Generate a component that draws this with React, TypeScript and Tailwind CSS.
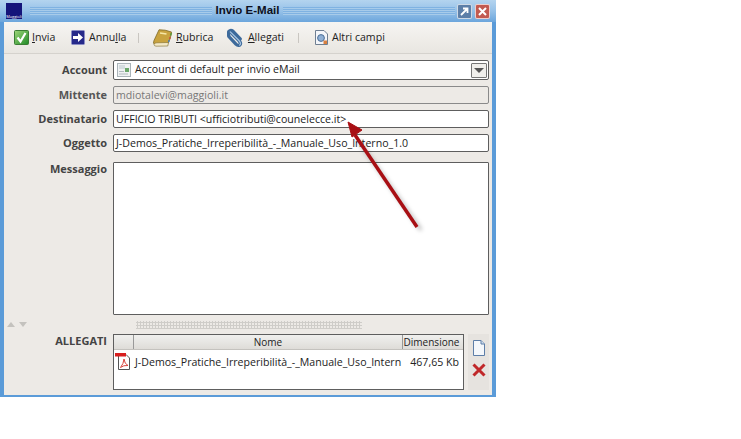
import React from 'react';

const FONT = "font-['Open_Sans','Liberation_Sans',sans-serif]";

const CheckIcon = () => (
  <svg width="15" height="15" viewBox="0 0 15 15">
    <defs>
      <linearGradient id="chk" x1="0" y1="0" x2="1" y2="1">
        <stop offset="0" stopColor="#9fd67a" />
        <stop offset="1" stopColor="#1f8a26" />
      </linearGradient>
    </defs>
    <rect x="0.5" y="0.5" width="14" height="14" rx="1" fill="url(#chk)" stroke="#3a7d34" />
    <path d="M3.5 7.5 L6.5 11.5 L11.5 3" fill="none" stroke="#fff" strokeWidth="2.2" />
  </svg>
);

const CancelIcon = () => (
  <svg width="14" height="15" viewBox="0 0 14 15">
    <rect x="0.5" y="0.5" width="13" height="14" rx="1" fill="#26298a" stroke="#8a8cc4" />
    <path d="M2 6 H7 V3 L12 7.5 L7 12 V9 H2 Z" fill="#fff" />
  </svg>
);

const BookIcon = () => (
  <svg width="20" height="18" viewBox="0 0 20 18">
    <path d="M6 0.8 Q12 0.5 18.5 3 Q18 9 15 14.5 L2 15.5 Q-0.5 15 1 11.5 Z" fill="#c9a33f" stroke="#7c6a2a" strokeWidth="0.8" />
    <path d="M1 15.3 Q2 13.5 4 13.8 L15.5 13.5 L14.8 17 L3 17.2 Q1 17 1 15.3 Z" fill="#f3e9c8" stroke="#7c6a2a" strokeWidth="0.6" />
    <path d="M7 4 L13.5 5" stroke="#f6e7a6" strokeWidth="1.6" />
    <path d="M18.4 4 L17.6 6.5" stroke="#5a9a3a" strokeWidth="1.5" />
    <path d="M17.2 8 L16.6 10" stroke="#c9563a" strokeWidth="1.5" />
    <path d="M16.2 11 L15.6 13" stroke="#4a7db5" strokeWidth="1.5" />
  </svg>
);

const ClipIcon = () => (
  <svg width="18" height="20" viewBox="0 0 18 20">
    <path d="M3.5 3.5 L13 13 Q15.5 16 13.5 17.5 Q11.5 18.5 9.5 16.5 L2.5 9 Q0.5 6 2 3 Q4 1 6.5 3 L14 11" fill="none" stroke="#3d6a9b" strokeWidth="3.6" strokeLinecap="round" />
    <path d="M3.5 3.5 L13 13 Q15.5 16 13.5 17.5" fill="none" stroke="#a5c3e0" strokeWidth="1.4" strokeLinecap="round" />
  </svg>
);

const FieldsIcon = () => (
  <svg width="13" height="15" viewBox="0 0 13 15">
    <path d="M0.5 0.5 H9 L12.5 4 V14.5 H0.5 Z" fill="#f4f6fa" stroke="#6f7f92" />
    <circle cx="6" cy="8" r="3.4" fill="#8fb0d6" stroke="#4d6f96" />
    <rect x="8.5" y="10.5" width="3.5" height="3.5" fill="#d98040" />
  </svg>
);

const AccountIcon = () => (
  <svg width="14" height="14" viewBox="0 0 14 14">
    <rect x="0.5" y="0.5" width="13" height="13" fill="#f0f2f3" stroke="#aab4b9" />
    <rect x="2" y="2" width="6" height="4" fill="#d5dde0" />
    <rect x="8" y="5" width="4" height="4" fill="#6aa86a" />
    <path d="M2 8.5 H7 M2 11 H11" stroke="#b2bbc0" />
  </svg>
);

const PdfIcon = () => (
  <svg width="16" height="17" viewBox="0 0 16 17">
    <path d="M3.5 1.5 H11 L14.5 5 V16.5 H3.5 Z" fill="#fff" stroke="#555" />
    <path d="M5.5 14.5 Q8.5 11 9 6 Q9.5 11 13 12.5 Q8.5 12 5.5 14.5 Z" fill="none" stroke="#d8433c" strokeWidth="1" />
    <rect x="0" y="0" width="11" height="3.5" fill="#d81f1f" />
  </svg>
);

const ToolButton = ({ icon, label, mark, after, gap }: { icon: React.ReactNode; label?: string; mark?: string; after?: string; gap: string }) => (
  <div className={`flex items-center ${gap}`}>
    {icon}
    <span className="text-[10.6px] text-[#222]">
      {label}
      {mark && <span className="underline">{mark}</span>}
      {after}
    </span>
  </div>
);

const Label = ({ children, className = '' }: { children: React.ReactNode; className?: string }) => (
  <div className={`text-right text-[11px] font-bold text-[#444] pr-[6px] ${className}`}>{children}</div>
);

const fieldBox = 'h-[18px] border border-[#5e5e5e] rounded-[2px] flex items-center px-[2px] text-[10.6px] leading-none';
const titleLines = 'h-[8px] bg-[repeating-linear-gradient(0deg,#a7cbea_0px,#a7cbea_1px,#7fb2e2_1px,#7fb2e2_2px)]';

export default function App() {
  return (
    <div className={`w-[741px] h-[439px] bg-white overflow-hidden relative ${FONT}`}>
      <div className="w-[496px] h-[397px] flex flex-col bg-[#5b9bd8]">
        {/* title bar */}
        <div className="h-[22px] shrink-0 flex items-center bg-gradient-to-b from-[#b4d4ef] via-[#96c1e8] to-[#6ca6dc] pl-[6px] pr-[6px]">
          <div className="w-[16px] h-[16px] bg-[#14147a] flex items-end justify-center">
            <span className="text-[4px] leading-[5px] text-white">Maggioli</span>
          </div>
          <div className={`w-[182px] ml-[8px] ${titleLines}`} />
          <div className="w-[71px] text-center text-[11.5px] font-bold text-[#0d1020] font-['Liberation_Sans',sans-serif]">Invio E-Mail</div>
          <div className={`w-[172px] ${titleLines}`} />
          <div className="flex gap-[3px] ml-[2px]">
            <div className="w-[15px] h-[15px] rounded-[2px] border border-white/70 bg-[#5d7fa8] flex items-center justify-center">
              <svg width="9" height="9" viewBox="0 0 9 9"><path d="M1 8 L7 2 M3 1.5 H7.5 V6" fill="none" stroke="#fff" strokeWidth="1.8" /></svg>
            </div>
            <div className="w-[15px] h-[15px] rounded-[2px] border border-white/70 bg-[#c25a50] flex items-center justify-center">
              <svg width="9" height="9" viewBox="0 0 9 9"><path d="M1 1 L8 8 M8 1 L1 8" fill="none" stroke="#fff" strokeWidth="2" /></svg>
            </div>
          </div>
        </div>

        {/* body */}
        <div className="flex-1 mx-[4px] mb-[2px] bg-[#edeae6] flex flex-col min-h-0">
          {/* toolbar */}
          <div className="h-[32px] shrink-0 flex items-center pl-[10px] pt-[1px] border-b border-[#d5d2cd] bg-gradient-to-b from-[#f6f5f2] to-[#e9e6e1]">
            <div className="w-[57px]"><ToolButton gap="gap-[3px]" icon={<CheckIcon />} mark="I" after="nvia" /></div>
            <div className="w-[67px]"><ToolButton gap="gap-[4px]" icon={<CancelIcon />} label="Annu" mark="l" after="la" /></div>
            <div className="w-px h-[10px] bg-[#c9c6c1]" />
            <div className="ml-[14px] w-[74px]"><ToolButton gap="gap-[3px]" icon={<BookIcon />} mark="R" after="ubrica" /></div>
            <div className="w-[57px]"><ToolButton gap="gap-[4px]" icon={<ClipIcon />} mark="A" after="llegati" /></div>
            <div className="ml-[14px] w-px h-[10px] bg-[#c9c6c1]" />
            <div className="ml-[16px]"><ToolButton gap="gap-[4px]" icon={<FieldsIcon />} label="Altri campi" /></div>
          </div>

          {/* form */}
          <div className="grid grid-cols-[109px_376px] pt-[6px] flex-1 content-start">
            <Label className="leading-[20px]">Account</Label>
            <div className="h-[20px] border border-[#5e5e5e] rounded-[2px] bg-white flex items-center text-[10.6px] text-[#222] pl-[3px] pr-[1px] gap-[4px]">
              <AccountIcon />
              <span className="flex-1">Account di default per invio eMail</span>
              <div className="w-[16px] h-[15px] border border-[#777] rounded-[1px] bg-[#f0efec] flex items-center justify-center">
                <div className="w-0 h-0 border-l-[5px] border-r-[5px] border-t-[5px] border-l-transparent border-r-transparent border-t-[#555]" />
              </div>
            </div>

            <Label className="mt-[6px] leading-[18px] text-[#555]">Mittente</Label>
            <div className={`${fieldBox} mt-[6px] text-[#777] border-[#8a8a8a]`}>mdiotalevi@maggioli.it</div>

            <Label className="mt-[6px] leading-[18px]">Destinatario</Label>
            <div className={`${fieldBox} mt-[6px] bg-white text-[#222]`}>UFFICIO TRIBUTI &lt;ufficiotributi@counelecce.it&gt;</div>

            <Label className="mt-[6px] leading-[18px]">Oggetto</Label>
            <div className={`${fieldBox} mt-[6px] bg-white text-[#222]`}>J-Demos_Pratiche_Irreperibilità_-_Manuale_Uso_Interno_1.0</div>

            <Label className="mt-[10px] leading-[14px]">Messaggio</Label>
            <div className="mt-[10px] h-[153px] border border-[#5e5e5e] rounded-[1px] bg-white" />

            {/* splitter */}
            <div className="h-[19px] flex items-center gap-[4px] pl-[3px]">
              <div className="w-0 h-0 border-l-[4px] border-r-[4px] border-b-[5px] border-l-transparent border-r-transparent border-b-[#c4c2be]" />
              <div className="w-0 h-0 border-l-[4px] border-r-[4px] border-t-[5px] border-l-transparent border-r-transparent border-t-[#c4c2be]" />
            </div>
            <div className="h-[19px] flex items-center">
              <div className="ml-[23px] w-[226px] h-[8px] bg-[radial-gradient(#cfcdc9_1px,transparent_1.2px)] bg-[length:3px_3px]" />
            </div>

            <Label className="leading-[14px]">ALLEGATI</Label>
            <div className="flex">
              <div className="w-[351px] h-[56px] border border-[#5e5e5e] bg-white flex flex-col">
                <div className="h-[15px] flex text-[10px] text-[#222] bg-gradient-to-b from-[#f0f0ee] to-[#dedcd8] border-b border-[#c4c2be] leading-[15px]">
                  <div className="w-[20px] border-r border-[#999]" />
                  <div className="w-[269px] text-center border-r border-[#999]">Nome</div>
                  <div className="flex-1 text-center pr-[3px]">Dimensione</div>
                </div>
                <div className="flex text-[10.6px] text-[#222] items-center pt-[3px] h-[22px]">
                  <div className="w-[21px] pl-[1px] shrink-0 mt-[-3px]"><PdfIcon /></div>
                  <div className="w-[270px] whitespace-nowrap">J-Demos_Pratiche_Irreperibilità_-_Manuale_Uso_Intern</div>
                  <div className="flex-1 text-right pr-[4px]">467,65 Kb</div>
                </div>
              </div>
              <div className="w-[21px] ml-[4px] h-[56px] bg-[#e6e3df] flex flex-col items-center pt-[6px] gap-[7px]">
                <svg width="14" height="16" viewBox="0 0 14 16">
                  <path d="M1.5 0.5 H9 L12.5 4 V15.5 H1.5 Z" fill="#f4f7fb" stroke="#5d7ea8" />
                  <path d="M9 0.5 V4 H12.5" fill="#cfdcec" stroke="#5d7ea8" />
                </svg>
                <svg width="14" height="14" viewBox="0 0 14 14">
                  <path d="M1.5 1.5 L12.5 12.5 M12.5 1.5 L1.5 12.5" fill="none" stroke="#c0282a" strokeWidth="3" />
                </svg>
              </div>
            </div>
          </div>
        </div>
      </div>

      {/* red annotation arrow drawn over the screenshot */}
      <svg className="absolute left-0 top-0" width="741" height="439" viewBox="0 0 741 439">
        <defs>
          <filter id="shadow" x="-30%" y="-30%" width="160%" height="160%">
            <feGaussianBlur stdDeviation="2" />
          </filter>
        </defs>
        <path d="M421 230 L358 140" stroke="#000" strokeOpacity="0.3" strokeWidth="3" filter="url(#shadow)" />
        <path d="M417 227 L355 135" stroke="#a80f14" strokeWidth="3.5" />
        <path d="M348 122 L362 130 L352 137 Z" fill="#a80f14" stroke="#a80f14" strokeWidth="1" />
      </svg>
    </div>
  );
}
